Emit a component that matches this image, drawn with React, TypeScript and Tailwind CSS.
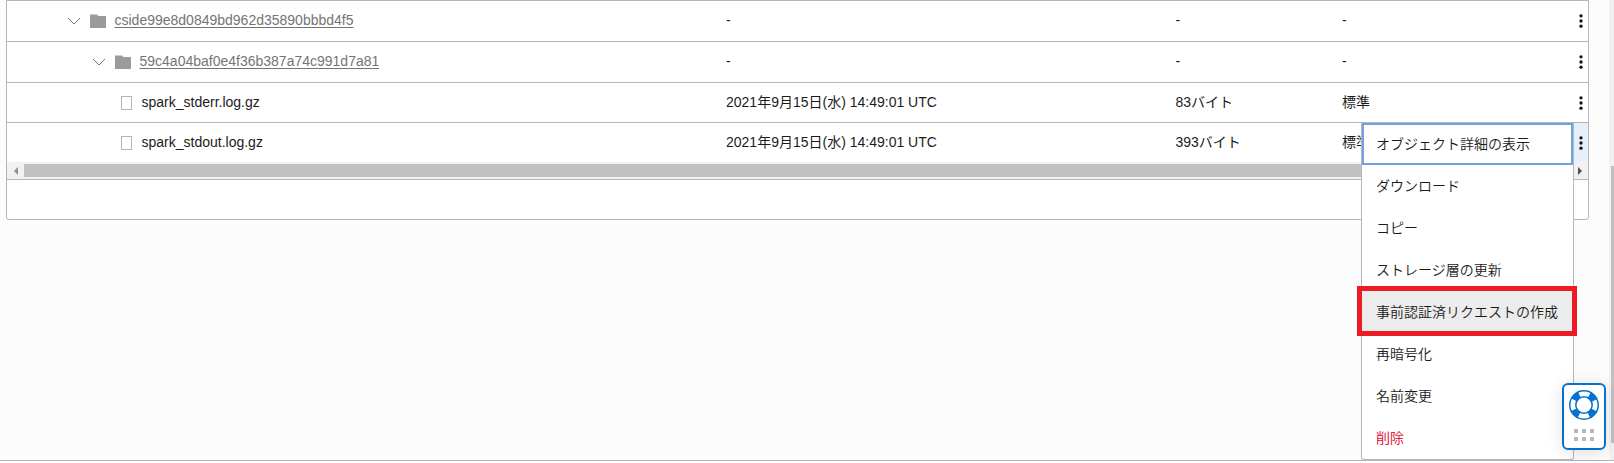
import React from 'react';

type Row = {
  name: string;
  folder: boolean;
  indent: string;
  height: string;
  modified: string;
  size: string;
  tier: string;
  active?: boolean;
};

const rows: Row[] = [
  { name: 'cside99e8d0849bd962d35890bbbd4f5', folder: true, indent: 'pl-[60px]', height: 'h-[41px]', modified: '-', size: '-', tier: '-' },
  { name: '59c4a04baf0e4f36b387a74c991d7a81', folder: true, indent: 'pl-[85px]', height: 'h-[41px]', modified: '-', size: '-', tier: '-' },
  { name: 'spark_stderr.log.gz', folder: false, indent: 'pl-[114px]', height: 'h-10', modified: '2021年9月15日(水) 14:49:01 UTC', size: '83バイト', tier: '標準' },
  { name: 'spark_stdout.log.gz', folder: false, indent: 'pl-[114px]', height: 'h-[39px]', modified: '2021年9月15日(水) 14:49:01 UTC', size: '393バイト', tier: '標準', active: true },
];

const menu = [
  'オブジェクト詳細の表示',
  'ダウンロード',
  'コピー',
  'ストレージ層の更新',
  '事前認証済リクエストの作成',
  '再暗号化',
  '名前変更',
  '削除',
];

function menuItemClass(index: number) {
  if (index === 0) return 'border-2 border-[#6fa3e0] pl-3 text-[#1b1b1b]';
  if (index === 4) return 'bg-[#ececec] pl-3.5 text-[#1b1b1b]';
  if (index === 7) return 'pl-3.5 text-[#e0002a]';
  return 'pl-3.5 text-[#1b1b1b]';
}

function FolderLabel({ name }: { name: string }) {
  return (
    <>
      <svg width="14" height="8" viewBox="0 0 14 8" className="shrink-0" fill="none" stroke="#777" strokeWidth="1">
        <path d="M1 1l6 6 6-6" />
      </svg>
      <svg width="16" height="14" viewBox="0 0 16 14" className="ml-[9px] shrink-0" fill="#9b9b9b">
        <path d="M0 .5h7l1.5 1.5H16v12H0z" />
      </svg>
      <a className="ml-[8.5px] pb-0.5 text-[#757575] underline decoration-1 underline-offset-2">{name}</a>
    </>
  );
}

function FileLabel({ name }: { name: string }) {
  return (
    <>
      <span className="h-[14px] w-[11px] shrink-0 border border-[#b5b5b5]" />
      <span className="ml-[9.5px] pb-0.5">{name}</span>
    </>
  );
}

function TableRow({ row }: { row: Row }) {
  return (
    <div className={`flex items-center ${row.height}`}>
      <div className={`flex w-[719px] shrink-0 items-center ${row.indent}`}>
        {row.folder ? <FolderLabel name={row.name} /> : <FileLabel name={row.name} />}
      </div>
      <div className="w-[449.5px] shrink-0 pb-0.5">{row.modified}</div>
      <div className="w-[166.5px] shrink-0 pb-0.5">{row.size}</div>
      <div className="grow pb-0.5">{row.tier}</div>
      <div className={`flex h-full w-[15px] items-center justify-end pr-[5px] ${row.active ? 'bg-[#e4f1fb]' : ''}`}>
        <svg width="4" height="16" viewBox="0 0 4 16" fill="#111">
          <circle cx="2" cy="2.8" r="1.65" />
          <circle cx="2" cy="8" r="1.65" />
          <circle cx="2" cy="13.2" r="1.65" />
        </svg>
      </div>
    </div>
  );
}

function HelpWidget() {
  return (
    <div className="absolute left-[1562px] top-[383px] flex h-[67px] w-11 flex-col items-center rounded-md border-2 border-[#0572ce] bg-white pt-[5px] shadow-[0_2px_16px_rgba(0,0,0,0.12)]">
      <svg width="30" height="30" viewBox="0 0 30 30" fill="none" stroke="#0572ce">
        <circle cx="15" cy="15" r="11.2" strokeWidth="7" strokeDasharray="7.4 10.193" strokeDashoffset="-5.1" />
        <circle cx="15" cy="15" r="14.2" strokeWidth="1.5" />
        <circle cx="15" cy="15" r="8.2" strokeWidth="1.5" />
      </svg>
      <div className="mt-[9px] grid grid-cols-3 gap-1">
        {[0, 1, 2, 3, 4, 5].map((n) => (
          <span key={n} className="size-1 bg-[#b3b8c3]" />
        ))}
      </div>
    </div>
  );
}

export default function App() {
  return (
    <div className="relative flex h-[463px] w-[1614px] flex-col overflow-hidden bg-white font-['Liberation_Sans','Noto_Sans_CJK_JP',sans-serif] text-sm leading-5 text-[#1b1b1b]">
      <div className="flex h-[460px] bg-[#fcfcfc]">
        <div className="ml-1.5 flex h-[220px] w-[1583px] flex-col divide-y divide-[#b1b6bf] rounded-b-[3px] border border-[#b1b6bf] bg-white">
          {rows.slice(0, 3).map((row) => (
            <TableRow key={row.name} row={row} />
          ))}
          <div>
            <TableRow row={rows[3]} />
            <div className="flex h-[17px] items-center bg-[#f1f1f1]">
              <div className="flex w-[17px] justify-center">
                <svg width="4" height="8" viewBox="0 0 4 8" fill="#8f8f8f">
                  <path d="M4 0v8L0 4z" />
                </svg>
              </div>
              <div className="h-[13px] w-[1480px] bg-[#c1c1c1]" />
              <div className="flex grow justify-end pr-[6px]">
                <svg width="4" height="8" viewBox="0 0 4 8" fill="#505050">
                  <path d="M0 0v8l4-4z" />
                </svg>
              </div>
            </div>
          </div>
          <div className="grow" />
        </div>
        <div className="ml-auto flex w-[5px] justify-end bg-[#f1f1f1] pt-[166px]">
          <div className="h-[277px] w-[3px] bg-[#c1c1c1]" />
        </div>
      </div>
      <div className="h-px bg-[#b1b6bf]" />

      <div className="absolute left-[1361px] top-[123px] flex h-[337px] w-[213px] flex-col rounded-b-[3px] border-x border-b border-[#b1b6bf] bg-white font-['Noto_Sans_CJK_JP',sans-serif] font-[350]">
        {menu.map((label, index) => (
          <div key={label} className={`flex h-[42px] shrink-0 items-center pb-0.5 whitespace-nowrap ${menuItemClass(index)}`}>
            {label}
          </div>
        ))}
      </div>
      <div className="absolute left-[1357px] top-[286px] h-[50px] w-[220px] border-5 border-[#ed1c24]" />
      <HelpWidget />
    </div>
  );
}
